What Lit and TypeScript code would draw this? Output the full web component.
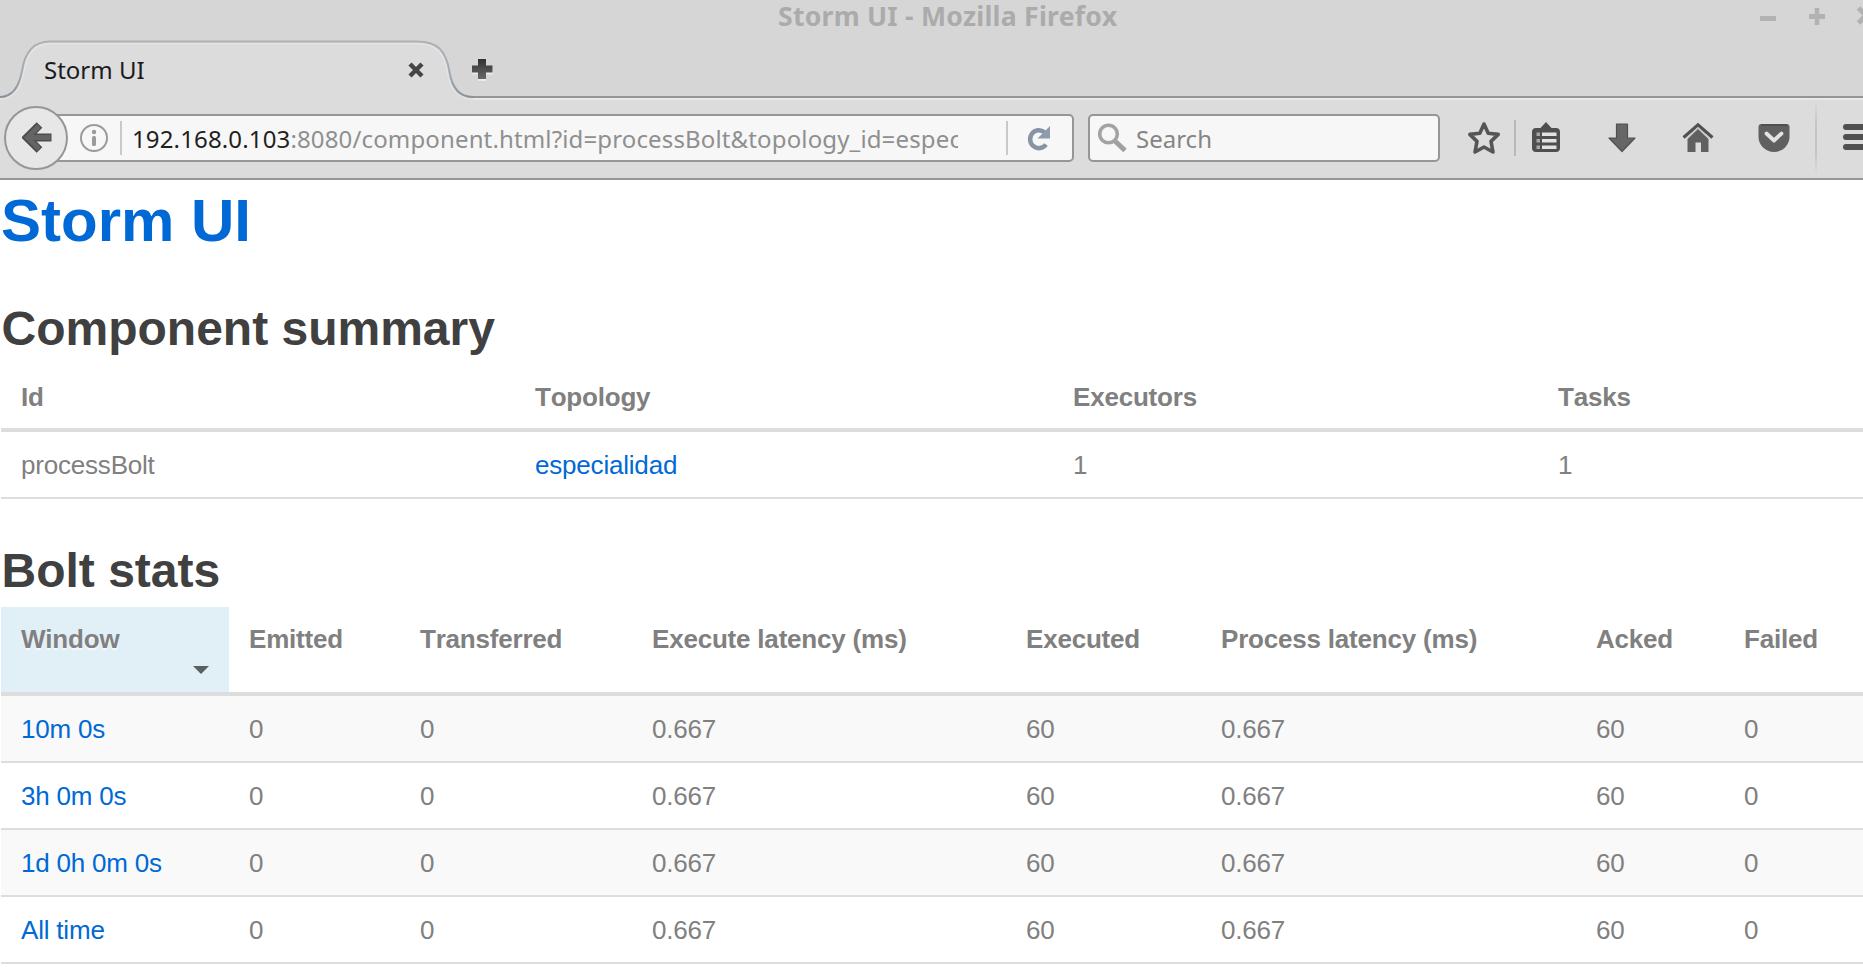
import { LitElement, html, css, nothing } from "lit";
import { customElement, property } from "lit/decorators.js";

@customElement("browser-chrome")
class BrowserChrome extends LitElement {
  static styles = css`
    :host {
      display: block;
      height: 180px;
      background: #dcdcdc;
      font-family: "Noto Sans", sans-serif;
      font-size: 24px;
      overflow: hidden;
    }
    svg { display: block; }
    .titlebar {
      height: 40px;
      background: #d6d6d6;
      display: grid;
      grid-template-columns: 778px 1fr 112px;
      box-sizing: border-box;
    }
    .title {
      grid-column: 2;
      font-weight: 700;
      font-size: 26.6px;
      letter-spacing: 0.24px;
      line-height: 32px;
      color: #ababab;
      white-space: nowrap;
    }
    .controls { grid-column: 3; width: 112px; height: 32px; overflow: hidden; }
    .tabs {
      height: 58px;
      background: #d6d6d6;
      box-shadow: inset 0 -2px #969696;
      display: flex;
    }
    .tab { display: grid; width: 464px; height: 58px; }
    .shape { grid-area: 1 / 1; position: relative; overflow: visible; }
    .label {
      grid-area: 1 / 1;
      position: relative;
      display: flex;
      align-items: center;
      justify-content: space-between;
      padding: 0 49px 0 44px;
      line-height: 60px;
      height: 60px;
      color: #1b1b1b;
    }
    .plus { margin: 16px 0 0 5px; }
    .toolbar {
      box-sizing: border-box;
      height: 82px;
      padding-bottom: 2px;
      border-top: 2px solid #e8e8e8;
      border-bottom: 2px solid #969696;
      display: flex;
      align-items: center;
      width: 1900px;
    }
    .back {
      box-sizing: border-box;
      width: 64px;
      height: 64px;
      border: 2px solid #969696;
      border-radius: 50%;
      background: #e7e7e7;
      margin-left: 4px;
      padding-left: 3px;
      position: relative;
      display: grid;
      place-items: center;
      flex: none;
    }
    .field {
      box-sizing: border-box;
      height: 48px;
      border: 2px solid #969696;
      background: #f7f7f7;
      border-radius: 5px;
      display: flex;
      align-items: center;
      line-height: 44px;
      flex: none;
    }
    .url { width: 1034px; margin-left: -28px; padding-left: 38px; }
    .line { width: 2px; height: 34px; background: #c9c9c9; flex: none; }
    .info { margin-right: 12px; }
    .address {
      width: 826px;
      margin: 0 48px 0 10px;
      padding-top: 1px;
      letter-spacing: 0.14px;
      overflow: hidden;
      white-space: nowrap;
      color: #8f8f8f;
    }
    .host { color: #1f1f1f; }
    .reload { margin-left: 19px; }
    .search { width: 352px; margin-left: 14px; padding-left: 7px; color: #858585; }
    .search svg { margin-right: 9px; }
    .search span { padding-top: 1px; }
    .icons { display: flex; align-items: center; }
    .star { margin-left: 26px; }
    .sep { width: 2px; height: 36px; background: #b9b9b9; margin: 0 14px 0 12px; }
    .arrow { margin-left: 44px; }
    .fade {
      width: 2px;
      height: 74px;
      margin: 0 25px;
      background: linear-gradient(transparent, #c4c4c4 30%, #c4c4c4 70%, transparent);
    }
  `;

  render() {
    return html`
      <div class="titlebar">
        <div class="title">Storm UI - Mozilla Firefox</div>
        <svg class="controls" viewBox="0 0 112 32" stroke="#b2b2b2" stroke-width="5" fill="none">
          <path d="M9 18.500h16M58 16.500h16" />
          <path d="M66 8v17" stroke-width="4.500" />
          <path d="M107.500 8l15 15m0-15l-15 15" />
        </svg>
      </div>
      <div class="tabs">
        <div class="tab">
          <svg class="shape" width="474" height="60" viewBox="0 0 474 60">
            <defs>
              <linearGradient id="edge" x1="0" y1="0" x2="0" y2="1">
                <stop offset="0" stop-color="#adb2b6" />
                <stop offset=".6" stop-color="#a3aab1" />
                <stop offset="1" stop-color="#89929a" />
              </linearGradient>
            </defs>
            <path d="M0 57C13 57 19 47 22 31C25 11 35 1.500 50 1.500H417C437 1.500 446 10 449.500 32C452 48 459 57 473 57V60H0Z" fill="#dcdcdc" />
            <path d="M0 58.800C14 58.500 21 48 24 31C27 13 36 3.500 50 3.500H417C435 3.500 444 12 447.500 32C450 49 458 58.800 473 59" stroke="#e4e4e4" stroke-width="1.500" fill="none" />
            <path d="M0 57C13 57 19 47 22 31C25 11 35 1.500 50 1.500H417C437 1.500 446 10 449.500 32C452 48 459 57 473 57" stroke="url(#edge)" stroke-width="2" fill="none" />
          </svg>
          <div class="label">
            <span>Storm UI</span>
            <svg width="18" height="18" viewBox="0 0 18 18">
              <path d="M3 3l12 12M15 3L3 15" stroke="#444" stroke-width="4.400" />
            </svg>
          </div>
        </div>
        <svg class="plus" width="26" height="26" viewBox="0 0 26 26">
          <defs>
            <linearGradient id="dark" x1="0" y1="0" x2="0" y2="1">
              <stop offset="0" stop-color="#303030" /><stop offset="1" stop-color="#696969" />
            </linearGradient>
          </defs>
          <path d="M9 5h8v7h7v6.500h-7v6.500h-8v-6.500H3V12h6z" fill="#eaeaea" />
          <path d="M9 3h8v6.500h6.500v7H17V23H9v-6.500H3v-7h6z" fill="url(#dark)" />
        </svg>
      </div>
      <div class="toolbar">
        <div class="back">
          <svg width="32" height="34" viewBox="0 0 32 34">
            <path d="M17.500 4L5 16.500L17.500 29M6 16.500H29.500" fill="none" stroke="#4c4c4c" stroke-width="8" />
            <path d="M17 5L5.500 16.500L17 28M7 16.500H28.500" fill="none" stroke="#646464" stroke-width="5" />
          </svg>
        </div>
        <div class="field url">
          <svg class="info" width="28" height="28" viewBox="0 0 28 28">
            <circle cx="14" cy="14" r="13" fill="none" stroke="#9b9b9b" stroke-width="2" />
            <circle cx="14" cy="8" r="2.200" fill="#9b9b9b" />
            <rect x="12" y="12" width="4" height="10" rx="1.500" fill="#9b9b9b" />
          </svg>
          <div class="line"></div>
          <div class="address"><span class="host">192.168.0.103</span>:8080/component.html?id=processBolt&amp;topology_id=especialidad</div>
          <div class="line"></div>
          <svg class="reload" width="24" height="26" viewBox="0 0 24 26">
            <path d="M17.500 7.200A8.800 9 0 1 0 19 19.500" fill="none" stroke="#8794a3" stroke-width="4.500" />
            <path d="M23 1V13.500H10.500Z" fill="#8e9baa" />
          </svg>
        </div>
        <div class="field search">
          <svg width="30" height="30" viewBox="0 0 30 30">
            <path d="M18 18L28 27.500" stroke="#a0a0a0" stroke-width="5" />
            <circle cx="11.500" cy="11" r="8.800" fill="none" stroke="#a3a3a3" stroke-width="3.600" />
          </svg>
          <span>Search</span>
        </div>
        <div class="icons">
          <svg class="star" width="36" height="36" viewBox="0 0 36 36">
            <path d="M18 4l4.200 9.200 10 1.200-7.200 7 2 10.600-9-5-9 5 2-10.600-7.200-7 10-1.200z" fill="none" stroke="#555" stroke-width="3.600" stroke-linejoin="round" />
          </svg>
          <div class="sep"></div>
          <svg width="32" height="36" viewBox="0 0 32 36">
            <path d="M6 8h4.500L16 2l5.500 6H26q4 0 4 4v16q0 4-4 4H6q-4 0-4-4V12q0-4 4-4z" fill="#4f4f4f" />
            <path d="M12 12.500h14.500v3.500H12zM12 19h14.500v3.500H12zM12 25.500h14.500v3.500H12z" fill="#e2e2e2" />
            <path d="M6.500 12.500H10v3.500H6.500zM6.500 19H10v3.500H6.500zM6.500 25.500H10v3.500H6.500z" fill="#a6a6a6" />
          </svg>
          <svg class="arrow" width="32" height="36" viewBox="0 0 32 36">
            <path d="M10.500 4h11v14h7.500L16 31.500 3 18h7.500z" fill="#666" stroke="#505050" stroke-width="1.200" stroke-linejoin="round" />
          </svg>
          <svg class="arrow" width="32" height="36" viewBox="0 0 32 36">
            <path d="M5.500 19L16 9l10.500 10v13H19v-9.500h-5.500V32h-8z" fill="#606060" />
            <path d="M1.500 17.500L16 4.800l14.500 12.700" fill="none" stroke="#505050" stroke-width="3" />
            <path d="M4 18.200L16 7.800l12 10.400" fill="none" stroke="#bbb" stroke-width="1" />
          </svg>
          <svg class="arrow" width="32" height="36" viewBox="0 0 32 36">
            <path d="M3.500 4h25q3 0 3 3v10c0 8-7 15-15.500 15S.5 25 .5 17V7q0-3 3-3z" fill="#606060" />
            <path d="M3 5h26" stroke="#505050" stroke-width="2" />
            <path d="M8.500 13.500l7.500 7 7.500-7" fill="none" stroke="#e3e3e3" stroke-width="3.800" stroke-linecap="round" stroke-linejoin="round" />
          </svg>
          <div class="fade"></div>
          <svg width="34" height="32" viewBox="0 0 34 32">
            <path d="M4 5h28M4 15h28M4 25h28" stroke="#505050" stroke-width="6" stroke-linecap="round" />
          </svg>
        </div>
      </div>
    `;
  }
}

interface Cell { text: string; link?: boolean; }

@customElement("stats-table")
class StatsTable extends LitElement {
  @property({ attribute: false }) widths: number[] = [];
  @property({ attribute: false }) heads: string[] = [];
  @property({ attribute: false }) rows: Cell[][] = [];
  @property({ type: Boolean }) sorted = false;

  static styles = css`
    :host { display: block; margin-left: 1px; }
    table {
      table-layout: fixed;
      border-collapse: separate;
      border-spacing: 0;
      width: 0;
      font-size: 26px;
      line-height: 27px;
      letter-spacing: -0.2px;
      font-kerning: none;
      color: #808080;
    }
    th, td { text-align: left; vertical-align: top; white-space: nowrap; }
    th { font-weight: 700; padding: 19px 0 17px 20px; border-bottom: 4px solid #ddd; }
    td { padding: 20px 0 18px 20px; border-bottom: 2px solid #ddd; }
    .striped tbody tr:nth-child(odd) td { background: #f9f9f9; }
    .active { background: #e1eff7; text-shadow: 0 2px 2px rgba(255, 255, 255, 0.75); }
    .caret {
      width: 0;
      height: 0;
      border: 8px solid transparent;
      border-bottom-width: 0;
      border-top-color: #596064;
      margin: 13px 20px 1px auto;
    }
    a { color: #0069d6; text-decoration: none; }
  `;

  render() {
    return html`
      <table class=${this.sorted ? "striped" : ""}>
        <colgroup>${this.widths.map((w) => html`<col style="width:${w}px" />`)}</colgroup>
        <thead>
          <tr>${this.heads.map((h, i) => html`<th class=${this.sorted && i === 0 ? "active" : ""}>${h}${
            this.sorted && i === 0 ? html`<div class="caret"></div>` : nothing}</th>`)}</tr>
        </thead>
        <tbody>
          ${this.rows.map((r) => html`<tr>${r.map((c) => html`<td>${c.link ? html`<a>${c.text}</a>` : c.text}</td>`)}</tr>`)}
        </tbody>
      </table>
    `;
  }
}

@customElement("app-root")
class AppRoot extends LitElement {
  static styles = css`
    :host {
      display: block;
      height: 972px;
      overflow: hidden;
      background: #fff;
      font-family: "Liberation Sans", Arial, sans-serif;
    }
    h1, h2 { margin: 0; font-weight: 700; }
    h1 { margin: 5px 0 0 1px; font-size: 60px; line-height: 72px; color: #0069d6; }
    h2 { margin: 38px 0 2px 1.5px; font-size: 48px; line-height: 68px; color: #404040; }
  `;

  private summary: Cell[][] = [
    [{ text: "processBolt" }, { text: "especialidad", link: true }, { text: "1" }, { text: "1" }],
  ];

  private stats: Cell[][] = ["10m 0s", "3h 0m 0s", "1d 0h 0m 0s", "All time"].map((w) => [
    { text: w, link: true },
    ...["0", "0", "0.667", "60", "0.667", "60", "0"].map((text) => ({ text })),
  ]);

  render() {
    return html`
      <browser-chrome></browser-chrome>
      <h1>Storm UI</h1>
      <h2>Component summary</h2>
      <stats-table
        .widths=${[514, 538, 485, 360]}
        .heads=${["Id", "Topology", "Executors", "Tasks"]}
        .rows=${this.summary}
      ></stats-table>
      <h2>Bolt stats</h2>
      <stats-table
        sorted
        .widths=${[228, 171, 232, 374, 195, 375, 148, 160]}
        .heads=${["Window", "Emitted", "Transferred", "Execute latency (ms)", "Executed", "Process latency (ms)", "Acked", "Failed"]}
        .rows=${this.stats}
      ></stats-table>
    `;
  }
}
